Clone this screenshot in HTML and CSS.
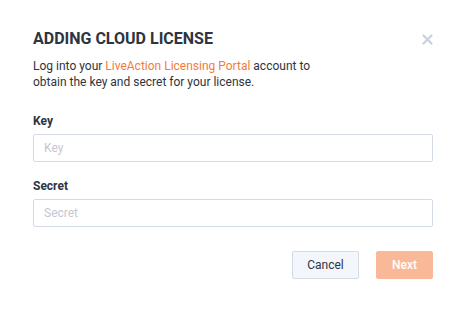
FILE: index.html
```html
<!DOCTYPE html>
<html lang="en">
<head>
  <meta charset="UTF-8">
  <meta name="viewport" content="width=device-width, initial-scale=1.0">
  <title>Adding Cloud License</title>
  <link rel="stylesheet" href="styles.css">
</head>
<body>
  <div class="modal">
    <header class="modal-header">
      <h1>ADDING CLOUD LICENSE</h1>
      <button class="close" aria-label="Close">
        <svg width="11" height="11" viewBox="0 0 11 11">
          <path d="M1.5 1.5 L9.5 9.5 M9.5 1.5 L1.5 9.5" stroke="#c9d1dd" stroke-width="2.2" stroke-linecap="round"/>
        </svg>
      </button>
    </header>

    <p class="intro">Log into your <a href="#">LiveAction Licensing Portal</a> account to<br>obtain the key and secret for your license.</p>

    <form class="form">
      <label class="field">
        <span>Key</span>
        <input type="text" placeholder="Key">
      </label>
      <label class="field">
        <span>Secret</span>
        <input type="text" placeholder="Secret">
      </label>

      <div class="actions">
        <button type="button" class="btn btn-cancel">Cancel</button>
        <button type="button" class="btn btn-next">Next</button>
      </div>
    </form>
  </div>
</body>
</html>
```

FILE: styles.css
```css
/* Base */
body {
  margin: 0;
  background-color: #fff;
  font-family: Roboto, "Liberation Sans", Arial, sans-serif;
  color: #2e3441;
}

.modal {
  width: 400px;
  padding: 29px 33px 0;
}

/* Header */
.modal-header {
  display: flex;
  justify-content: space-between;
  align-items: center;
}

.modal-header h1 {
  margin: 0;
  font-size: 16px;
  line-height: 20px;
  font-weight: 700;
}

.close {
  background: none;
  border: none;
  padding: 0;
  width: 12px;
  height: 12px;
  display: flex;
  align-items: center;
  justify-content: center;
  cursor: pointer;
}

.intro {
  margin: 9px 0 0;
  font-size: 12px;
  line-height: 16px;
}

.intro a {
  color: #f47b3c;
  text-decoration: none;
}

/* Form */
.form {
  margin-top: 23px;
}

.field {
  display: flex;
  flex-direction: column;
  margin-bottom: 16px;
}

.field span {
  font-size: 12px;
  line-height: 16px;
  font-weight: 700;
  margin-bottom: 5px;
}

.field input {
  box-sizing: border-box;
  height: 28px;
  border: 1px solid #d4dbe6;
  border-radius: 2px;
  padding: 0 10px;
  font-family: inherit;
  font-size: 12px;
  color: #2e3441;
}

.field input::placeholder {
  color: #c3c8d0;
}

.actions {
  display: flex;
  justify-content: flex-end;
  gap: 17px;
  margin-top: 24px;
}

.btn {
  height: 28px;
  border-radius: 2px;
  font-family: inherit;
  font-size: 12px;
  cursor: pointer;
}

.btn-cancel {
  width: 67px;
  background-color: #f3f6fb;
  border: 1px solid #d4dbe6;
  color: #2e3441;
}

.btn-next {
  width: 57px;
  background-color: #f9b998;
  border: 1px solid #f9b998;
  color: #fff;
  font-weight: 500;
}
```
